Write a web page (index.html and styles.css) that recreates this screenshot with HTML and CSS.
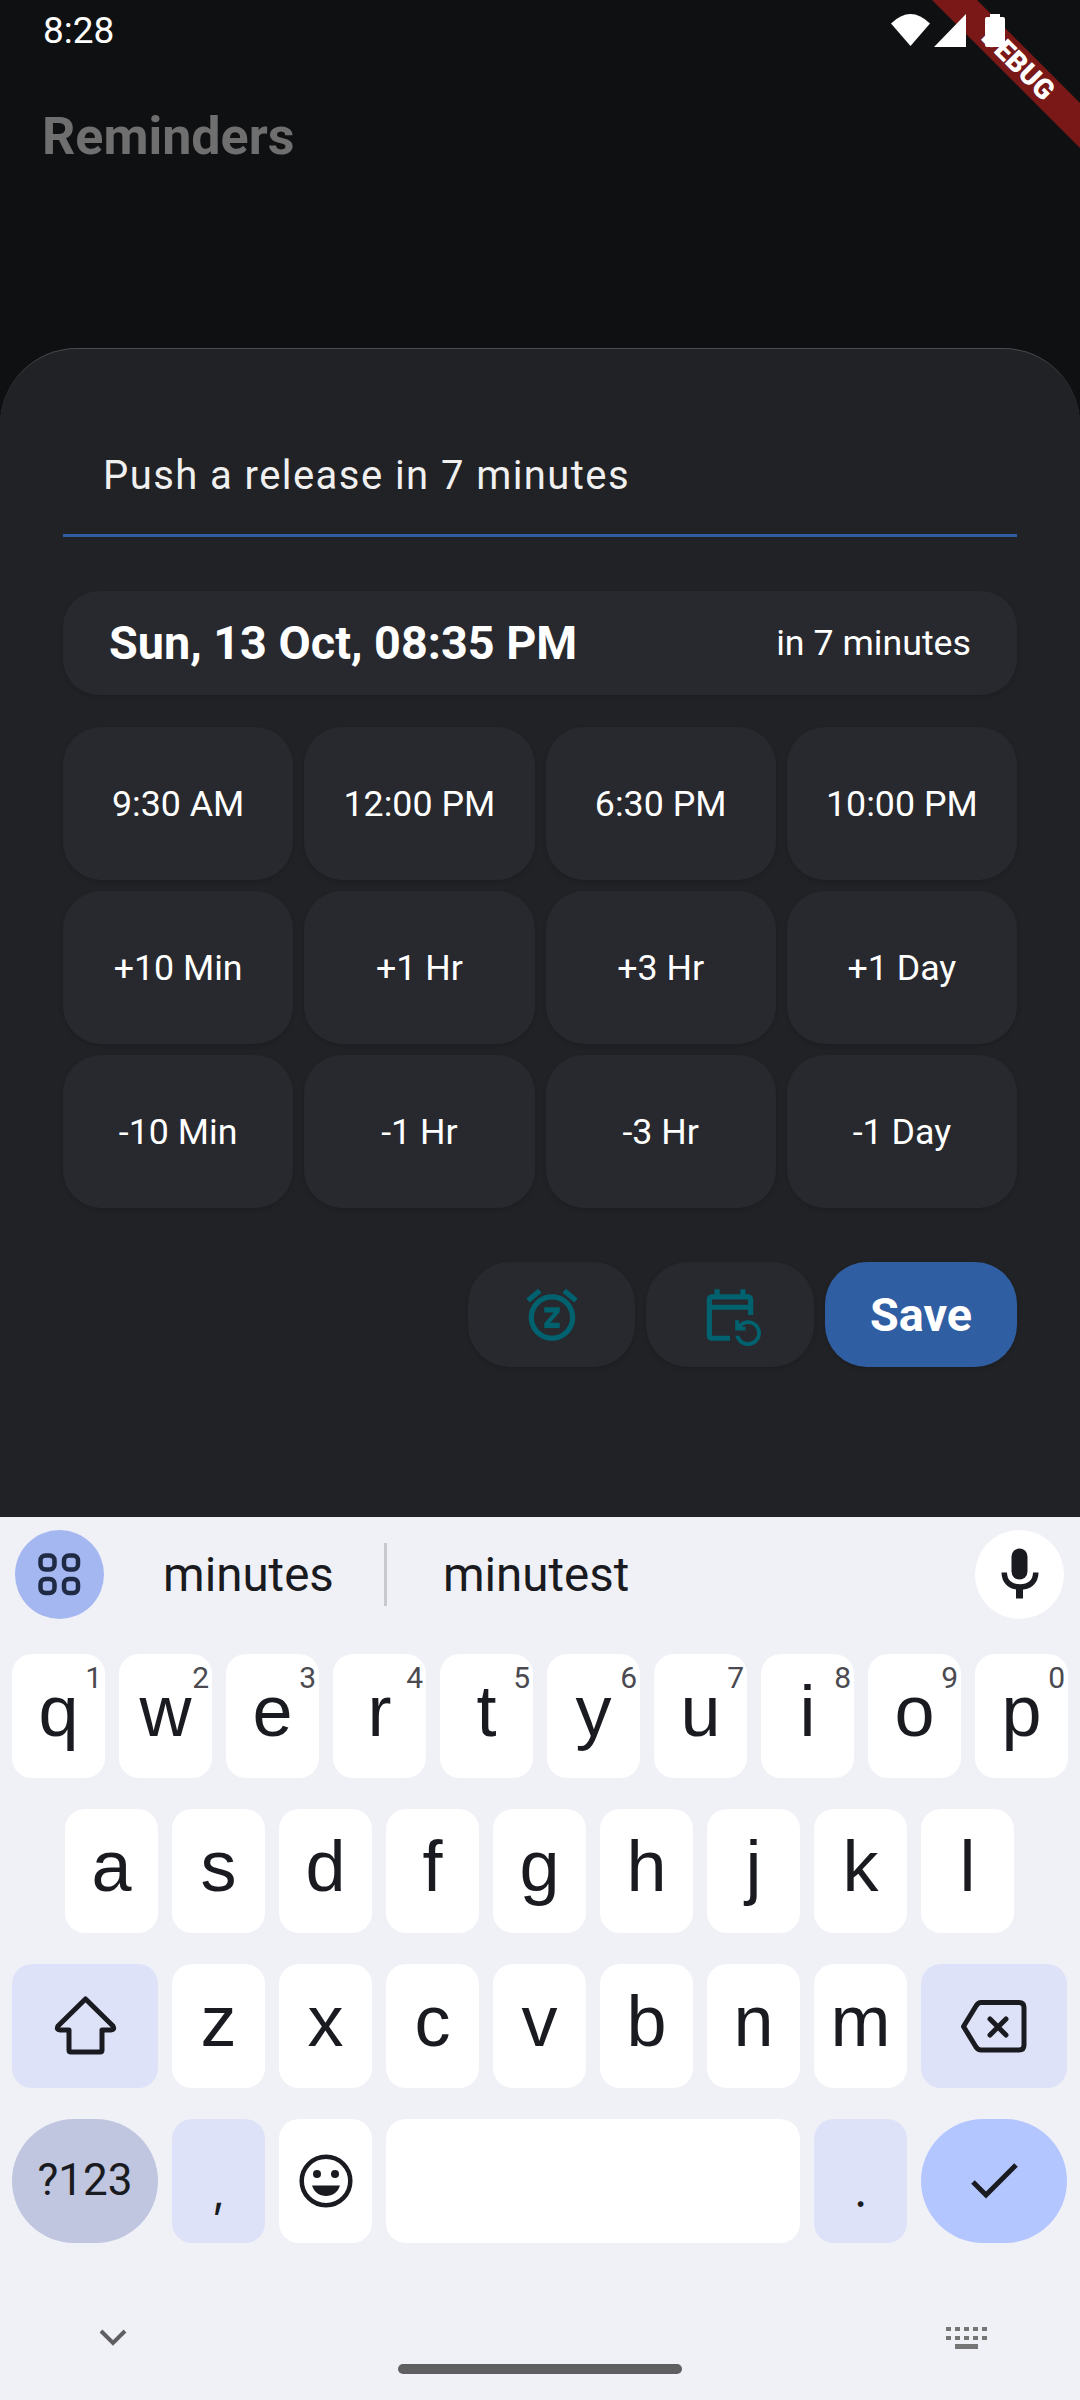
FILE: index.html
```html
<!DOCTYPE html>
<html lang="en">
<head>
<meta charset="utf-8">
<title>Reminders</title>
<link rel="stylesheet" href="styles.css">
</head>
<body>
<div class="phone">
  <header class="top">
    <div class="status">
      <span class="clock">8:28</span>
      <svg class="status-icons" width="120" height="40" viewBox="0 0 120 40" aria-hidden="true">
        <path fill="#fff" d="M25.500 34 6 11.500Q25.500-7.500 45 11.500Z"/>
        <path fill="#fff" d="M81 2V35H49Z"/>
        <path fill="#fff" d="M105 2h10v3h3a2 2 0 0 1 2 2v26a2 2 0 0 1-2 2h-16a2 2 0 0 1-2-2V7a2 2 0 0 1 2-2h3z"/>
      </svg>
    </div>
    <h1 class="title">Reminders</h1>
  </header>

  <section class="sheet">
    <div class="field">Push a release in 7 minutes</div>
    <div class="date-card">
      <span class="date-main">Sun, 13 Oct, 08:35 PM</span>
      <span class="date-rel">in 7 minutes</span>
    </div>
    <div class="quick-grid">
      <button class="quick">9:30 AM</button>
      <button class="quick">12:00 PM</button>
      <button class="quick">6:30 PM</button>
      <button class="quick">10:00 PM</button>
      <button class="quick">+10 Min</button>
      <button class="quick">+1 Hr</button>
      <button class="quick">+3 Hr</button>
      <button class="quick">+1 Day</button>
      <button class="quick">-10 Min</button>
      <button class="quick">-1 Hr</button>
      <button class="quick">-3 Hr</button>
      <button class="quick">-1 Day</button>
    </div>
    <div class="actions">
      <button class="action action-snooze">
        <svg width="62" height="62" viewBox="0 0 24 24" aria-hidden="true"><path fill="#00626e" d="M9 11h3.630L9 15.200V17h6v-2h-3.630L15 10.800V9H9v2zm7.056-7.654 1.282-1.535 4.607 3.850-1.280 1.540zM3.336 7.190l-1.280-1.536L6.662 1.810l1.280 1.536zM12 6c3.860 0 7 3.140 7 7s-3.140 7-7 7-7-3.140-7-7 3.140-7 7-7m0-2c-4.970 0-9 4.030-9 9s4.030 9 9 9 9-4.030 9-9-4.030-9-9-9z"/></svg>
      </button>
      <button class="action action-repeat">
        <svg width="62" height="62" viewBox="0 0 24 24" aria-hidden="true"><path fill="#00626e" fill-rule="evenodd" d="M21 12V6c0-1.100-.9-2-2-2h-1V2h-2v2H8V2H6v2H5c-1.100 0-2 .9-2 2v14c0 1.100.9 2 2 2h7v-2H5V10h14v2h2zM5 6h14v2H5zM15.640 20c.43 1.450 1.770 2.500 3.360 2.500 1.930 0 3.500-1.570 3.500-3.500s-1.570-3.500-3.500-3.500c-.95 0-1.820.38-2.450 1H18V18h-4v-4h1.500v1.430c.9-.88 2.140-1.430 3.500-1.430 2.760 0 5 2.240 5 5s-2.240 5-5 5c-2.420 0-4.440-1.720-4.900-4h1.540z"/></svg>
      </button>
      <button class="action action-save">Save</button>
    </div>
  </section>

  <section class="keyboard">
    <div class="strip">
      <span class="round apps">
        <svg width="47" height="47" viewBox="0 0 47 47" fill="none" stroke="#1f2a44" stroke-width="4.500" aria-hidden="true">
          <rect x="4.500" y="4.500" width="14" height="14" rx="5"/><rect x="28" y="4.500" width="14" height="14" rx="5"/>
          <rect x="4.500" y="28" width="14" height="14" rx="5"/><rect x="28" y="28" width="14" height="14" rx="5"/>
        </svg>
      </span>
      <span class="cand cand-a">minutes</span>
      <span class="cand-rule"></span>
      <span class="cand cand-b">minutest</span>
      <span class="round mic">
        <svg width="60" height="60" viewBox="0 0 60 60" aria-hidden="true">
          <rect x="21.500" y="3.500" width="16" height="31" rx="8" fill="#1a1b20"/>
          <path d="M14.250 27.500C14.250 37 21 42 30 42S45.750 37 45.750 27.500" fill="none" stroke="#1a1b20" stroke-width="5.500"/>
          <rect x="26" y="42" width="7" height="11.500" fill="#1a1b20"/>
        </svg>
      </span>
    </div>
    <div class="rows">
      <div class="row">
        <span class="key">q<sup class="hint">1</sup></span>
        <span class="key">w<sup class="hint">2</sup></span>
        <span class="key">e<sup class="hint">3</sup></span>
        <span class="key">r<sup class="hint">4</sup></span>
        <span class="key">t<sup class="hint">5</sup></span>
        <span class="key">y<sup class="hint">6</sup></span>
        <span class="key">u<sup class="hint">7</sup></span>
        <span class="key">i<sup class="hint">8</sup></span>
        <span class="key">o<sup class="hint">9</sup></span>
        <span class="key">p<sup class="hint">0</sup></span>
      </div>
      <div class="row row-home">
        <span class="key">a</span><span class="key">s</span><span class="key">d</span>
        <span class="key">f</span><span class="key">g</span><span class="key">h</span>
        <span class="key">j</span><span class="key">k</span><span class="key">l</span>
      </div>
      <div class="row">
        <span class="key key-wide key-fn">
          <svg class="shift-icon" width="64" height="62" viewBox="0 0 64 62" fill="none" stroke="#1a1b20" stroke-width="5" stroke-linejoin="round" aria-hidden="true"><path d="M32.500 6 60 33Q62 37 58 37H49V57Q49 59 47 59H18Q16 59 16 57V37H7Q3 37 5 33Z"/></svg>
        </span>
        <span class="key">z</span><span class="key">x</span><span class="key">c</span><span class="key">v</span>
        <span class="key">b</span><span class="key">n</span><span class="key">m</span>
        <span class="key key-wide key-fn">
          <svg width="70" height="57" viewBox="0 0 70 57" fill="none" stroke="#1a1b20" stroke-width="5" stroke-linejoin="round" aria-hidden="true"><path d="M22 4.500H60Q65 4.500 65 9.500V47Q65 52 60 52H22Q19 52 17 49L4.500 28.500 17 8Q19 4.500 22 4.500Z"/><path stroke-linecap="round" d="M31 21 47 37M47 21 31 37"/></svg>
        </span>
      </div>
      <div class="row">
        <span class="key key-wide key-sym">?123</span>
        <span class="key key-fn key-punct">,</span>
        <span class="key key-emoji">
          <svg width="60" height="60" viewBox="0 0 60 60" aria-hidden="true"><circle cx="30" cy="30" r="24.300" fill="none" stroke="#1a1b20" stroke-width="4.500"/><circle cx="21" cy="23" r="4" fill="#1a1b20"/><circle cx="39" cy="23" r="4" fill="#1a1b20"/><path fill="#1a1b20" d="M16 34.500H44C42 41 36.500 45 30 45S18 41 16 34.500Z"/></svg>
        </span>
        <span class="key key-space"></span>
        <span class="key key-fn key-punct">.</span>
        <span class="key key-wide key-enter">
          <svg width="50" height="38" viewBox="0 0 50 38" fill="none" stroke="#1a1b20" stroke-width="5" aria-hidden="true"><path d="M4 20 17 33 47 3"/></svg>
        </span>
      </div>
    </div>
    <div class="nav">
      <svg width="30" height="20" viewBox="0 0 30 20" fill="none" stroke="#5f5f62" stroke-width="4" aria-hidden="true"><path d="M3 3 15 15 27 3"/></svg>
      <span class="home-pill"></span>
      <svg width="42" height="22" viewBox="0 0 42 22" fill="#757575" aria-hidden="true"><path d="M0 0h5v4H0zM9 0h5v4H9zM18 0h5v4h-5zM27 0h5v4h-5zM36 0h5v4h-5zM0 9h5v4H0zM9 9h5v4H9zM18 9h5v4h-5zM27 9h5v4h-5zM36 9h5v4h-5zM9 17h23v5H9z"/></svg>
    </div>
  </section>

  <div class="ribbon" aria-hidden="true">
    <svg width="148" height="148" viewBox="0 0 148 148"><path fill="#7a1818" d="M0 0H45L148 103V148Z"/></svg>
    <span class="ribbon-text">DEBUG</span>
  </div>
</div>
</body>
</html>
```
FILE: styles.css
```css
* { box-sizing: border-box; }
html, body { margin: 0; padding: 0; }
body { background: #0f1012; font-family: Roboto, "Noto Sans", sans-serif; }

.phone { position: relative; width: 1080px; height: 2400px; overflow: hidden; display: flex; flex-direction: column; background: #0f1012; }

.top { height: 348px; flex: none; padding: 0 0 0 44px; }
.status { position: relative; z-index: 2; display: flex; justify-content: space-between; height: 60px; padding-right: 75px; padding-top: 10px; }
.clock { color: #fff; font-size: 37px; line-height: 42px; margin-left: -1px; }
.status-icons { margin-top: 2px; }
.title { margin: 47px 0 0 -2px; color: #6f6f6f; font-size: 52px; line-height: 60px; font-weight: 700; }

.sheet { height: 1169px; flex: none; background: #212226; border-radius: 77px 77px 0 0; border-top: 1px solid #4a4b50; padding: 0 63px; }
.field { height: 188px; padding: 102px 0 0 40px; color: #f0f0f0; font-size: 40px; line-height: 50px; letter-spacing: 1.430px; border-bottom: 3px solid #2f5ea5; }

.date-card { margin-top: 54px; height: 104px; display: flex; justify-content: space-between; align-items: center; padding: 0 46px; background: #28292e; border-radius: 36px; box-shadow: 0 2px 4px rgba(0,0,0,.14); color: #fff; }
.date-main { font-size: 46.750px; font-weight: 700; }
.date-rel { font-size: 35.750px; }

.quick-grid { margin-top: 32px; display: grid; grid-template-columns: repeat(4, 1fr); grid-auto-rows: 153px; gap: 11px; }
.quick { border: 0; padding: 0; background: #28292e; border-radius: 38px; box-shadow: 0 2px 4px rgba(0,0,0,.14); color: #fff; font: 400 35.750px Roboto, sans-serif; }

.actions { margin-top: 54px; display: flex; justify-content: flex-end; gap: 11px; height: 105px; }
.action { border: 0; padding: 0; display: flex; align-items: center; justify-content: center; border-radius: 42px; background: #28292e; box-shadow: 0 2px 4px rgba(0,0,0,.14); }
.action-snooze { width: 167px; }
.action-repeat { width: 168px; }
.action-save { width: 192px; background: #305ea3; color: #fff; font: 700 46.750px Roboto, sans-serif; }

.keyboard { flex: 1; background: #f0f0f7; display: flex; flex-direction: column; font-family: "Liberation Sans", sans-serif; color: #1a1b20; }
.strip { display: flex; align-items: center; height: 89px; margin-top: 13px; padding: 0 16px 0 15px; }
.round { width: 89px; height: 89px; border-radius: 50%; flex: none; display: flex; align-items: center; justify-content: center; }
.apps { background: #a4b7f0; }
.mic { background: #fff; margin-left: auto; }
.cand { font-family: Roboto, sans-serif; font-size: 47.500px; font-weight: 400; line-height: 60px; }
.cand-a { margin-left: 59px; }
.cand-rule { width: 3px; height: 63px; background: #c8c8ce; margin-left: 50px; }
.cand-b { margin-left: 56px; }

.rows { margin-top: 35px; display: flex; flex-direction: column; gap: 31px; }
.row { display: flex; gap: 14px; height: 124px; padding: 0 12px; }
.row-home { padding: 0 65px; }
.key { position: relative; flex: 1 1 0; min-width: 0; display: flex; align-items: center; justify-content: center; background: #fff; border-radius: 20px; font-size: 72px; line-height: 1; padding-bottom: 10px; }
.key-wide { flex: none; width: 146px; padding-bottom: 0; }
.key-fn { background: #dde2f8; padding-bottom: 0; }
.key-emoji { padding-bottom: 0; }
.shift-icon { margin-bottom: 4px; }
.key-sym { background: #c0c6df; border-radius: 62px; font-family: Roboto, sans-serif; font-size: 44px; padding-bottom: 2px; }
.key-enter { background: #b3c6ff; border-radius: 62px; }
.key-space { flex: none; width: 414px; }
.row .key:not(.key-wide):not(.key-space) { flex: none; width: 93px; }
.key-punct { font-family: Inter, sans-serif; font-size: 44px; padding-top: 19px; }
.hint { position: absolute; top: 9px; right: 3px; color: #4a4a50; font-family: Roboto, sans-serif; font-size: 30px; line-height: 30px; vertical-align: baseline; }

.nav { flex: 1; display: grid; grid-template-columns: 1fr 284px 1fr; align-items: start; padding: 0; position: relative; }
.nav svg:first-child { justify-self: start; margin: 85px 0 0 98px; }
.home-pill { height: 10px; margin-top: 121px; background: #5f5f62; border-radius: 5px; }
.nav svg:last-child { justify-self: end; margin: 84px 92px 0 0; }

.ribbon { position: absolute; top: 0; right: 0; width: 148px; height: 148px; }
.ribbon svg { display: block; }
.ribbon-text { position: absolute; left: 34px; top: 48px; width: 104px; text-align: center; color: #fff; font: 900 28px/32px Roboto, sans-serif; transform: rotate(45deg); }
```
